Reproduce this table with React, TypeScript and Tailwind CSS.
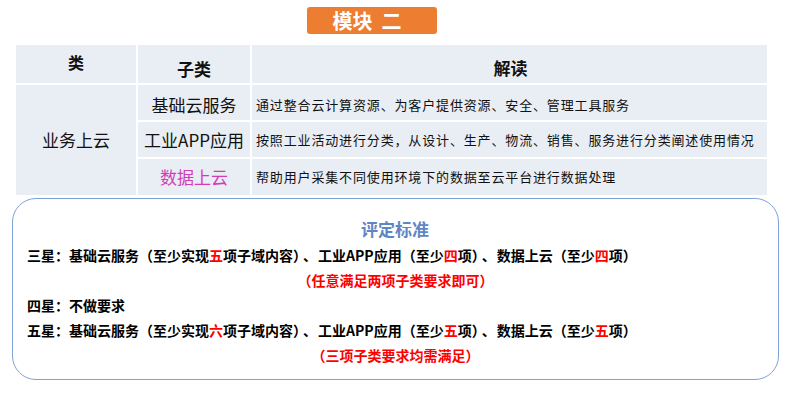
const cell = "bg-[#e9edf4] flex items-center";
const red = "text-[#ff0000]";
const dun = "ml-[3px] mr-[1px]";

export default function App() {
  return (
    <div
      className="w-[785px] h-[393px] bg-white relative overflow-hidden"
      style={{ fontFamily: '"Noto Sans CJK SC", "Noto Sans", sans-serif' }}
    >
      {/* 标题 */}
      <div className="flex pt-[7px] pl-[307px]">
        <div className="w-[130px] h-[27px] bg-[#ed7d31] rounded-[3px] flex items-center justify-center pr-[10px] text-white font-bold text-[20px] leading-none">
          模块&nbsp;&nbsp;二
        </div>
      </div>

      {/* 表格 */}
      <div className="ml-[16px] mt-[11px] w-[751px] grid grid-cols-[120px_112px_1fr] grid-rows-[38px_35px_35px_36px] gap-[2px] bg-white text-[#111]">
        <div className={`${cell} justify-center font-bold text-[16px] pb-[4px]`}>类</div>
        <div className={`${cell} justify-center font-bold text-[17px] pt-[10px]`}>子类</div>
        <div className={`${cell} justify-center font-bold text-[17px] pt-[8px] pl-[2px]`}>解读</div>

        <div className={`${cell} row-span-3 justify-center text-[17px]`}>业务上云</div>

        <div className={`${cell} justify-center text-[17px] pt-[4px]`}>基础云服务</div>
        <div className={`${cell} pl-[4px] text-[13px] tracking-[0.85px] pt-[4px]`}>
          通过整合云计算资源、为客户提供资源、安全、管理工具服务
        </div>

        <div className={`${cell} justify-center text-[17px]`}>工业APP应用</div>
        <div className={`${cell} pl-[4px] text-[13px] tracking-[0.85px]`}>
          按照工业活动进行分类，从设计、生产、物流、销售、服务进行分类阐述使用情况
        </div>

        <div className={`${cell} justify-center text-[17px] text-[#d43bb6]`}>数据上云</div>
        <div className={`${cell} pl-[4px] text-[13px] tracking-[0.85px]`}>
          帮助用户采集不同使用环境下的数据至云平台进行数据处理
        </div>
      </div>

      {/* 评定标准 */}
      <div className="ml-[12px] mt-[3px] w-[767px] h-[182px] border-[1.5px] border-[#7fa2d6] rounded-[24px] pt-[17px] pl-[14px] pr-[14px] flex flex-col font-bold text-[14px] leading-[25px] text-black">
        <div className="text-center text-[17px] leading-[26px] text-[#5f86c4] mb-[1px] pr-[1px]">评定标准</div>
        <div>
          三星：基础云服务（至少实现<span className={red}>五</span>项子域内容）<span className={dun}>、</span>工业APP应用（至少<span className={red}>四</span>项）<span className={dun}>、</span>数据上云（至少<span className={red}>四</span>项）
        </div>
        <div className={`text-center ${red}`}>（任意满足两项子类要求即可）</div>
        <div>四星：不做要求</div>
        <div>
          五星：基础云服务（至少实现<span className={red}>六</span>项子域内容）<span className={dun}>、</span>工业APP应用（至少<span className={red}>五</span>项）<span className={dun}>、</span>数据上云（至少<span className={red}>五</span>项）
        </div>
        <div className={`text-center ${red}`}>（三项子类要求均需满足）</div>
      </div>
    </div>
  );
}
